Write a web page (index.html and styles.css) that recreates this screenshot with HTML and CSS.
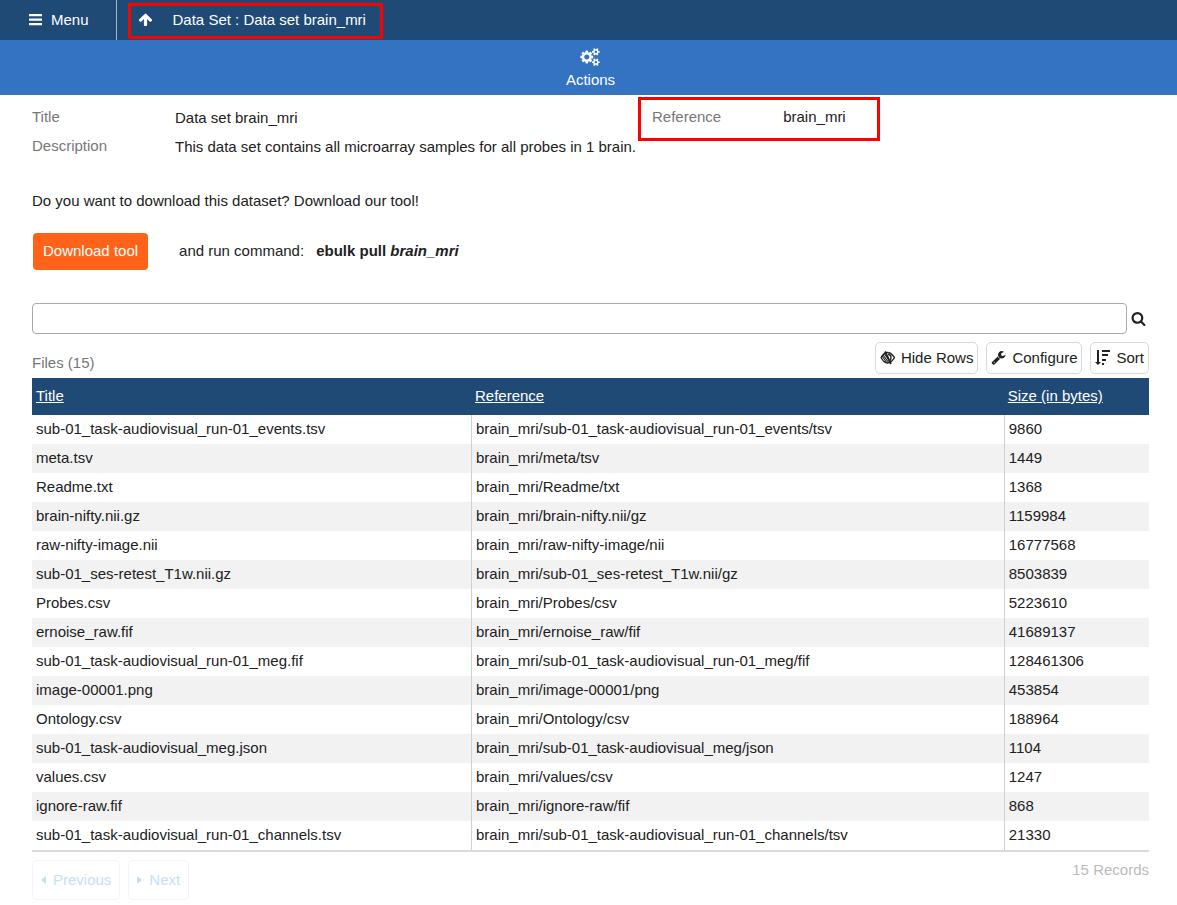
FILE: index.html
```html
<!DOCTYPE html>
<html lang="en">
<head>
<meta charset="utf-8">
<title>Data Set : Data set brain_mri</title>
<link rel="stylesheet" href="styles.css">
</head>
<body>
<header class="topbar">
  <button class="menu" type="button">
    <svg class="icon" viewBox="0 0 15 15" aria-hidden="true"><path d="M1 2h13v2.300H1zM1 6.500h13v2.300H1zM1 11h13v2.300H1z"/></svg>
    Menu
  </button>
  <nav class="crumb marked">
    <a class="crumb-up" href="#" aria-label="Up"><svg class="icon" viewBox="0 0 1792 1792" aria-hidden="true"><path d="M1675 971q0 51-37 90l-75 75q-38 38-91 38-54 0-90-38l-294-293v704q0 52-37.500 84.500t-90.500 32.500h-128q-53 0-90.500-32.500t-37.500-84.500v-704l-294 293q-36 38-90 38t-90-38l-75-75q-38-38-38-90 0-53 38-91l651-651q35-37 90-37 54 0 91 37l651 651q37 39 37 91z"/></svg></a>
    <a href="#">Data Set : Data set brain_mri</a>
  </nav>
</header>
<div class="actionbar">
  <button class="actions" type="button">
    <svg class="icon-cogs" viewBox="0 0 1920 1792" aria-hidden="true"><path d="M896 896q0-106-75-181t-181-75-181 75-75 181 75 181 181 75 181-75 75-181zm768 512q0-52-38-90t-90-38-90 38-38 90q0 53 37.500 90.500t90.500 37.500 90.500-37.500 37.500-90.500zm0-1024q0-52-38-90t-90-38-90 38-38 90q0 53 37.500 90.500t90.500 37.500 90.500-37.500 37.500-90.500zm-384 421v185q0 10-7 19.500t-16 10.500l-155 24q-11 35-32 76 34 48 90 115 7 11 7 20 0 12-7 19-23 30-82.500 89.500t-78.500 59.500q-11 0-21-7l-115-90q-37 19-77 31-11 108-23 155-7 24-30 24h-186q-11 0-20-7.500t-10-17.500l-23-153q-34-10-75-31l-118 89q-7 7-20 7-11 0-21-8-144-133-144-160 0-9 7-19 10-14 41-53t47-61q-23-44-35-82l-152-24q-10-1-17-9.500t-7-19.500v-185q0-10 7-19.500t16-10.500l155-24q11-35 32-76-34-48-90-115-7-11-7-20 0-12 7-20 22-30 82-89t79-59q11 0 21 7l115 90q34-18 77-32 11-108 23-154 7-24 30-24h186q11 0 20 7.500t10 17.500l23 153q34 10 75 31l118-89q8-7 20-7 11 0 21 8 144 133 144 160 0 8-7 19-12 16-42 54t-45 60q23 48 34 82l152 23q10 2 17 10.500t7 19.500zm640 533v140q0 16-149 31-12 27-30 52 51 113 51 138 0 4-4 7-122 71-124 71-8 0-46-47t-52-68q-20 2-30 2t-30-2q-14 21-52 68t-46 47q-2 0-124-71-4-3-4-7 0-25 51-138-18-25-30-52-149-15-149-31v-140q0-16 149-31 13-29 30-52-51-113-51-138 0-4 4-7 4-2 35-20t59-34 30-16q8 0 46 46.500t52 67.500q20-2 30-2t30 2q51-71 92-112l6-2q4 0 124 70 4 3 4 7 0 25-51 138 17 23 30 52 149 15 149 31zm0-1024v140q0 16-149 31-12 27-30 52 51 113 51 138 0 4-4 7-122 71-124 71-8 0-46-47t-52-68q-20 2-30 2t-30-2q-14 21-52 68t-46 47q-2 0-124-71-4-3-4-7 0-25 51-138-18-25-30-52-149-15-149-31v-140q0-16 149-31 13-29 30-52-51-113-51-138 0-4 4-7 4-2 35-20t59-34 30-16q8 0 46 46.500t52 67.500q20-2 30-2t30 2q51-71 92-112l6-2q4 0 124 70 4 3 4 7 0 25-51 138 17 23 30 52 149 15 149 31z"/></svg>
    Actions
  </button>
</div>
<main class="page">
  <section class="details">
    <dl class="fields">
      <dt>Title</dt><dd>Data set brain_mri</dd>
      <dt>Description</dt><dd>This data set contains all microarray samples for all probes in 1 brain.</dd>
    </dl>
    <dl class="reference marked">
      <dt>Reference</dt><dd>brain_mri</dd>
    </dl>
  </section>
  <p class="prompt">Do you want to download this dataset? Download our tool!</p>
  <div class="download">
    <button class="download-button" type="button">Download tool</button>
    <span>and run command:</span>
    <strong>ebulk pull <em>brain_mri</em></strong>
  </div>
  <form class="search">
    <input class="search-input" type="text" aria-label="Search files">
    <button class="search-button" type="button" aria-label="Search"><svg class="icon" viewBox="0 0 1792 1792" aria-hidden="true"><path d="M1216 832q0-185-131.500-316.500t-316.500-131.500-316.500 131.500-131.500 316.500 131.500 316.500 316.500 131.500 316.500-131.500 131.500-316.500zm512 832q0 52-38 90t-90 38q-54 0-90-38l-343-342q-179 124-399 124-143 0-273.500-55.500t-225-150-150-225-55.500-273.500 55.500-273.500 150-225 225-150 273.500-55.500 273.500 55.500 225 150 150 225 55.500 273.500q0 220-124 399l343 343q37 37 37 90z"/></svg></button>
  </form>
  <div class="listhead">
    <h2 class="list-title">Files (15)</h2>
    <div class="tools">
      <button class="tool" type="button"><svg class="icon" viewBox="0 0 15 15" aria-hidden="true"><g fill="none" stroke="currentColor"><path d="M1 7.500Q4 2.500 7.500 2.500T14.500 7.500Q11 13 7.500 13T1 7.500z" stroke-width="1.300"/><path d="M2 6l5 7M3 5l6 8M4.500 4l5 7" stroke-width="1.100"/><path d="M5 1.500l6 12.500" stroke-width="1.800"/><path d="M8 4.500q3 0 3 3t-1.500 3" stroke-width="1.300"/></g></svg>Hide Rows</button>
      <button class="tool" type="button"><svg class="icon" viewBox="0 0 1792 1792" aria-hidden="true"><path d="M448 1472q0-26-19-45t-45-19-45 19-19 45 19 45 45 19 45-19 19-45zm644-420l-682 682q-37 37-90 37-52 0-91-37l-106-108q-38-36-38-90 0-53 38-91l681-681q39 98 114.500 173.500t173.500 114.500zm634-435q0 39-23 106-47 134-164.500 217.500t-258.500 83.500q-185 0-316.500-131.500t-131.500-316.500 131.500-316.500 316.500-131.500q58 0 121.500 16.500t107.500 46.500q16 11 16 28t-16 28l-293 169v224l193 107q5-3 79-48.500t135.500-81 70.500-35.500q15 0 23.500 10t8.500 25z"/></svg>Configure</button>
      <button class="tool" type="button"><svg class="icon" viewBox="0 0 15 15" aria-hidden="true"><path d="M2 0h2v12h2l-3 3-3-3h2zM7 0h8v2H7zM7 4h6v2H7zM7 9h4v2H7zM7 13h2v2H7z"/></svg>Sort</button>
    </div>
  </div>
  <table class="files">
    <colgroup><col class="col-title"><col class="col-reference"><col></colgroup>
    <thead><tr><th><a href="#">Title</a></th><th><a href="#">Reference</a></th><th><a href="#">Size (in bytes)</a></th></tr></thead>
    <tbody>
      <tr><td>sub-01_task-audiovisual_run-01_events.tsv</td><td>brain_mri/sub-01_task-audiovisual_run-01_events/tsv</td><td>9860</td></tr>
      <tr><td>meta.tsv</td><td>brain_mri/meta/tsv</td><td>1449</td></tr>
      <tr><td>Readme.txt</td><td>brain_mri/Readme/txt</td><td>1368</td></tr>
      <tr><td>brain-nifty.nii.gz</td><td>brain_mri/brain-nifty.nii/gz</td><td>1159984</td></tr>
      <tr><td>raw-nifty-image.nii</td><td>brain_mri/raw-nifty-image/nii</td><td>16777568</td></tr>
      <tr><td>sub-01_ses-retest_T1w.nii.gz</td><td>brain_mri/sub-01_ses-retest_T1w.nii/gz</td><td>8503839</td></tr>
      <tr><td>Probes.csv</td><td>brain_mri/Probes/csv</td><td>5223610</td></tr>
      <tr><td>ernoise_raw.fif</td><td>brain_mri/ernoise_raw/fif</td><td>41689137</td></tr>
      <tr><td>sub-01_task-audiovisual_run-01_meg.fif</td><td>brain_mri/sub-01_task-audiovisual_run-01_meg/fif</td><td>128461306</td></tr>
      <tr><td>image-00001.png</td><td>brain_mri/image-00001/png</td><td>453854</td></tr>
      <tr><td>Ontology.csv</td><td>brain_mri/Ontology/csv</td><td>188964</td></tr>
      <tr><td>sub-01_task-audiovisual_meg.json</td><td>brain_mri/sub-01_task-audiovisual_meg/json</td><td>1104</td></tr>
      <tr><td>values.csv</td><td>brain_mri/values/csv</td><td>1247</td></tr>
      <tr><td>ignore-raw.fif</td><td>brain_mri/ignore-raw/fif</td><td>868</td></tr>
      <tr><td>sub-01_task-audiovisual_run-01_channels.tsv</td><td>brain_mri/sub-01_task-audiovisual_run-01_channels/tsv</td><td>21330</td></tr>
    </tbody>
  </table>
  <footer class="pager">
    <button class="page-button" type="button" disabled><svg class="caret" viewBox="0 0 5 8" aria-hidden="true"><path d="M5 0v8L0 4z"/></svg>Previous</button>
    <button class="page-button" type="button" disabled><svg class="caret" viewBox="0 0 5 8" aria-hidden="true"><path d="M0 0v8l5-4z"/></svg>Next</button>
    <span class="records">15 Records</span>
  </footer>
</main>
</body>
</html>
```
FILE: styles.css
```css
* { box-sizing: border-box; }
body {
  margin: 0;
  background: #fff;
  color: #212121;
  font: 15px/20px "Liberation Sans", Arial, sans-serif;
}
button, input { font: inherit; color: inherit; }
button { background: none; border: 0; padding: 0; }
a { color: inherit; text-decoration: none; }
svg { fill: currentColor; flex: none; }
dl, dd, p, h2 { margin: 0; }
.icon { width: 15px; height: 15px; display: block; margin-bottom: 1px; }
.marked { border: 3px solid #f00; }

.topbar { display: flex; height: 40px; background: #1f4a75; color: #fff; }
.menu {
  display: flex;
  align-items: center;
  gap: 8px;
  padding: 0 27px 0 28px;
  border-right: 1px solid #a5b7c8;
}
.crumb {
  display: flex;
  align-items: center;
  gap: 20px;
  margin: 3px 0 1px 11px;
  padding: 0 14px 2px 7px;
}

.actionbar {
  display: flex;
  justify-content: center;
  padding-left: 4px;
  background: #3473c1;
  color: #fff;
}
.actions {
  display: flex;
  flex-direction: column;
  align-items: center;
  gap: 4px;
  padding: 8px 12px 5px;
}
.icon-cogs { width: 20px; height: 18px; }

.page { padding: 0 28px 5px 32px; }
.details { display: grid; grid-template-columns: 54.25% auto; justify-content: start; align-items: start; }
.fields { display: grid; grid-template-columns: 143px auto; row-gap: 9px; padding-top: 12px; }
.fields dd { padding-top: 1px; margin-bottom: -1px; }
dt { color: #777; }
.reference {
  display: flex;
  gap: 62px;
  margin-top: 2px;
  padding: 7px 31px 11px 11px;
}
.prompt { padding-top: 35px; }
.download { display: flex; align-items: center; margin-top: 22px; }
.download-button {
  height: 37px;
  margin: 0 31px 0 1px;
  padding: 0 10px 1px;
  border-radius: 4px;
  background: #ff6319;
  color: #fff;
}
.download span, .download strong { padding-bottom: 1px; }
.download strong { margin-left: 12px; }

.search { display: flex; align-items: center; gap: 4px; margin-top: 33px; }
.search-input {
  flex: 1;
  min-width: 0;
  height: 31px;
  padding: 0 8px;
  border: 1px solid #aaa;
  border-radius: 4px;
}
.search-button { width: 18px; }

.listhead { display: flex; justify-content: space-between; margin-top: 8px; }
.list-title { padding-top: 11px; font-size: 15px; font-weight: 400; color: #777; }
.tools { display: flex; gap: 8px; }
.tool {
  display: flex;
  align-items: center;
  gap: 6px;
  height: 32px;
  padding: 0 4px;
  border: 1px solid #d9d9d9;
  border-radius: 5px;
}

.files {
  width: 100%;
  margin-top: 4px;
  border-spacing: 0;
  table-layout: fixed;
  border-bottom: 2px solid #d9d9d9;
}
.col-title { width: 39.3%; }
.col-reference { width: 47.7%; }
.files th {
  padding: 8px 4px 9px;
  background: #1f4a75;
  color: #fff;
  font-weight: 400;
  text-align: left;
}
.files th a { text-decoration: underline; }
.files td { padding: 4px 4px 5px; }
.files td + td { border-left: 1px solid #d0d0d0; }
.files tbody tr:nth-child(even) { background: #f2f2f2; }

.pager { display: flex; gap: 8px; margin-top: 8px; }
.page-button {
  display: flex;
  align-items: center;
  gap: 7px;
  height: 40px;
  padding: 0 8px;
  border: 1px solid #f4f4f4;
  border-radius: 5px;
  color: #c5dff7;
}
.caret { width: 5px; height: 8px; }
.records { margin-left: auto; color: #bbb; }
```
